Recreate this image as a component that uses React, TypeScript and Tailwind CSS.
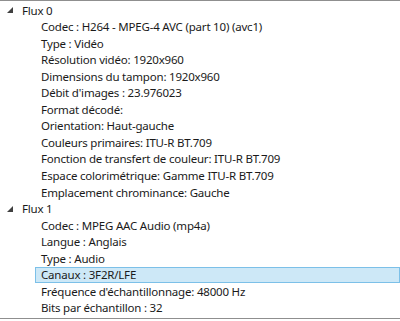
const groups = [
  {
    title: "Flux 0",
    rows: [
      "Codec : H264 - MPEG-4 AVC (part 10) (avc1)",
      "Type : Vidéo",
      "Résolution vidéo: 1920x960",
      "Dimensions du tampon: 1920x960",
      "Débit d'images : 23.976023",
      "Format décodé:",
      "Orientation: Haut-gauche",
      "Couleurs primaires: ITU-R BT.709",
      "Fonction de transfert de couleur: ITU-R BT.709",
      "Espace colorimétrique: Gamme ITU-R BT.709",
      "Emplacement chrominance: Gauche",
    ],
  },
  {
    title: "Flux 1",
    rows: [
      "Codec : MPEG AAC Audio (mp4a)",
      "Langue : Anglais",
      "Type : Audio",
      "Canaux : 3F2R/LFE",
      "Fréquence d'échantillonnage: 48000 Hz",
      "Bits par échantillon : 32",
    ],
  },
];

const selected = "Canaux : 3F2R/LFE";

function Arrow() {
  return (
    <svg width="6" height="6" viewBox="0 0 6 6" className="shrink-0">
      <path d="M6 0 L6 6 L0 6 Z" fill="#404040" />
    </svg>
  );
}

export default function App() {
  return (
    <div className="h-[321px] w-[400px] bg-white overflow-hidden">
      <div
        className="h-[319px] border-t border-b border-[#8f8f8f] pt-[1px] text-[11.5px] tracking-[-0.2px] text-[#1a1a1a]"
        style={{ fontFamily: '"Noto Sans", "Open Sans", sans-serif' }}
      >
        {groups.map((g) => (
          <div key={g.title}>
            <div className="flex h-[16.55px] items-center leading-none">
              <div className="flex w-[22px] items-center pl-[7px]">
                <Arrow />
              </div>
              <span>{g.title}</span>
            </div>
            {g.rows.map((r) => (
              <div
                key={r}
                className={
                  r === selected
                    ? "flex h-[16.55px] items-center border border-[#7cc0e8] bg-[#cde8f7] pl-[5px] ml-[35px] leading-none"
                    : "flex h-[16.55px] items-center pl-[41px] leading-none whitespace-nowrap"
                }
              >
                <span>{r}</span>
              </div>
            ))}
          </div>
        ))}
      </div>
    </div>
  );
}
